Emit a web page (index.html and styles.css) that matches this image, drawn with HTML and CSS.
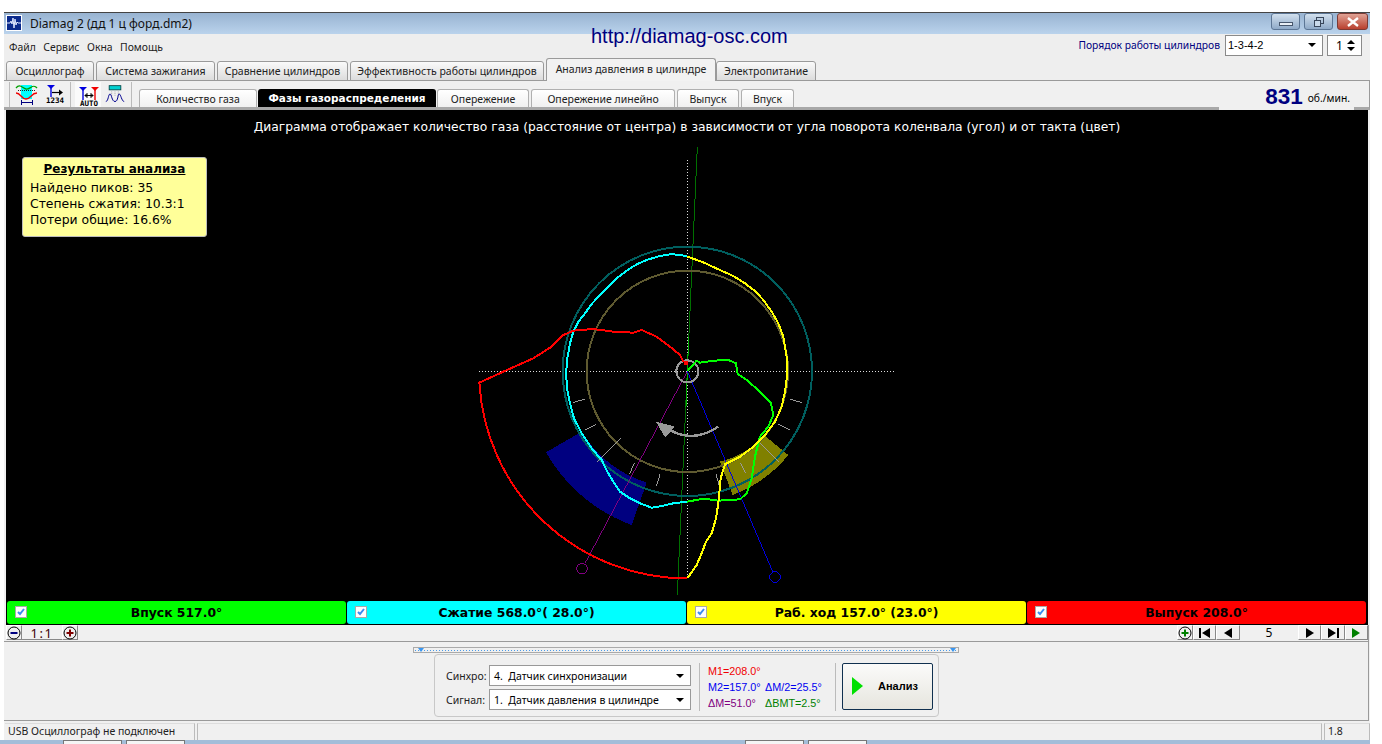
FILE: index.html
```html
<!DOCTYPE html>
<html lang="en">
<head>
    <meta charset="UTF-8">
    <meta name="viewport" content="width=device-width, initial-scale=1.0">
    <title>Diamag 2</title>
    <link rel="stylesheet" href="styles.css">
</head>
<body>

    <div class="window">

        <!-- Title bar -->
        <div class="titlebar">
            <svg class="app-icon" width="16" height="16" viewBox="0 0 16 16">
                <rect width="16" height="16" fill="#fff"/>
                <rect x="1" y="1" width="14" height="14" fill="#0a2a8c"/>
                <polyline points="1,8 4,8 5,6 6,9 7,3 8,13 9,4 10,10 11,7 12,8 15,8" fill="none" stroke="#dfe8ff" stroke-width="1"/>
            </svg>
            <span class="title-text">Diamag 2 (дд 1 ц форд.dm2)</span>
            <div class="win-buttons">
                <div class="win-btn"><span class="glyph-min"></span></div>
                <div class="win-btn">
                    <svg width="12" height="12" viewBox="0 0 12 12" fill="none" stroke="#38465a"><rect x="3.5" y="1.5" width="7" height="6"/><rect x="1.5" y="4.5" width="6" height="6" fill="#c9d9ea"/></svg>
                </div>
                <div class="win-btn win-close">
                    <svg width="14" height="10" viewBox="0 0 14 10" stroke="#fff" stroke-width="2.4"><path d="M2 1l10 8M12 1L2 9"/></svg>
                </div>
            </div>
        </div>

        <!-- Menu -->
        <div class="menubar">
            <span class="menu-item">Файл</span>
            <span class="menu-item">Сервис</span>
            <span class="menu-item">Окна</span>
            <span class="menu-item">Помощь</span>
            <div class="order">
                <span class="order-label">Порядок работы цилиндров</span>
                <div class="combo order-combo"><span>1-3-4-2</span><i class="arrow"></i></div>
                <div class="combo spin"><span>1</span><b class="spin-arrows"><i class="up"></i><i class="arrow"></i></b></div>
            </div>
        </div>
        <div class="site-link">http://diamag-osc.com</div>

        <!-- Main tabs -->
        <div class="tabs">
            <div class="tab">Осциллограф</div>
            <div class="tab">Система зажигания</div>
            <div class="tab">Сравнение цилиндров</div>
            <div class="tab">Эффективность работы цилиндров</div>
            <div class="tab tab-active">Анализ давления в цилиндре</div>
            <div class="tab">Электропитание</div>
        </div>

        <!-- Toolbar with sub tabs -->
        <div class="toolbar">
            <div class="tool-group">
                <svg class="tool" width="24" height="24" viewBox="0 0 24 24" fill="none">
                    <rect x="6" y="3" width="11" height="14" fill="#00ffff"/>
                    <path d="M1 6c4-5 6 0 10 1s7-6 11-1" stroke="#00a000" stroke-width="1.3"/>
                    <path d="M1 11c5 0 5 6 10 6s5-6 11-6" stroke="#f00000" stroke-width="1.3"/>
                    <path d="M3 8.500h17" stroke="#222" stroke-dasharray="1 1"/>
                    <path d="M6.500 18v5M17.500 18v5M7 20.500h10" stroke="#000080"/>
                </svg>
                <svg class="tool" width="20" height="24" viewBox="0 0 20 24" fill="none">
                    <path d="M2 3h8L6 7z" fill="#0000e0"/>
                    <path d="M6 6v9" stroke="#0000e0" stroke-width="1.4"/>
                    <path d="M7 10.500h8" stroke="#000" stroke-width="1.2"/>
                    <path d="M14 7.500l4 3-4 3z" fill="#000"/>
                    <text x="10" y="21" class="tool-text" text-anchor="middle">1234</text>
                </svg>
            </div>
            <div class="tool-group">
                <svg class="tool tool-pressed" width="26" height="25" viewBox="0 0 26 25" fill="none">
                    <path d="M4 5h8L8 9z" fill="#0000e0"/>
                    <path d="M16 5h8l-4 4z" fill="#f00000"/>
                    <path d="M8 8v10" stroke="#0000e0" stroke-width="1.4"/>
                    <path d="M20 8v10" stroke="#f00000" stroke-width="1.4"/>
                    <path d="M10 13.500h8M10 13.500l2-2v4zM18 13.500l-2-2v4z" stroke="#000"/>
                    <text x="14" y="24" class="tool-text" text-anchor="middle">AUTO</text>
                </svg>
                <svg class="tool" width="20" height="20" viewBox="0 0 24 24" fill="none">
                    <rect x="5" y="2" width="14" height="5" fill="#00d0d0" stroke="#004040"/>
                    <path d="M8 9v8M12 9v6M16 9v8" stroke="#999" stroke-dasharray="1 1"/>
                    <path d="M1 21c3 0 3-9 5-9s2 9 6 9 3-9 5-9 3 9 6 9" stroke="#000090" stroke-width="1.2"/>
                </svg>
            </div>
            <div class="subtabs">
                <div class="subtab">Количество газа</div>
                <div class="subtab subtab-active">Фазы газораспределения</div>
                <div class="subtab">Опережение</div>
                <div class="subtab">Опережение линейно</div>
                <div class="subtab">Выпуск</div>
                <div class="subtab">Впуск</div>
            </div>
            <div class="rpm"><b>831</b><span>об./мин.</span></div>
        </div>

        <!-- Diagram -->
        <div class="chart">
            <svg class="chart-svg" width="1362" height="490" viewBox="6 110 1362 490" fill="none">
                <g transform="translate(470 230) scale(.33333)">
                    <path d="M228 667L335 605A360 360 0 0 0 530 758L485 885A490 490 0 0 1 228 667Z" fill="#000080"/>
                    <path d="M750 695A295 295 0 0 0 885 618L955 675A394 394 0 0 1 788 795Z" fill="#808000"/>

                    <path d="M27 424H1272M652 -210V1045" stroke="#ddd" stroke-width="3" stroke-dasharray="3 6"/>
                    <path d="M682 -250L622 1095" stroke="#007000" stroke-width="3"/>
                    <path d="M656 320L648 530" stroke="#00b000" stroke-width="3"/>

                    <circle cx="652" cy="424" r="374" stroke="#005f5f" stroke-width="6"/>
                    <circle cx="652" cy="424" r="302" stroke="#5f5a30" stroke-width="6"/>

                    <path d="M652 424L345 1000" stroke="#800080" stroke-width="3"/>
                    <circle cx="336" cy="1016" r="16" stroke="#800080" stroke-width="3"/>
                    <path d="M652 424L908 1025" stroke="#0000e0" stroke-width="3"/>
                    <circle cx="915" cy="1041" r="16" stroke="#0000e0" stroke-width="3"/>

                    <path d="M310 517L345 508M345 600L378 583M380 697L452 625M478 733L493 700M560 767L570 733M738 733L748 767M810 698L828 730M870 640L925 695M925 583L960 600M960 508L995 517" stroke="#999" stroke-width="3"/>

                    <path d="M745 590Q670 640 600 600" stroke="#999" stroke-width="7"/>
                    <polygon points="558,575 615,590 585,622" fill="#999"/>

                    <circle cx="652" cy="424" r="33" stroke="#999" stroke-width="6"/>

                    <polyline class="curve" stroke="#00ffff" points="652,80 630,74 600,73 570,78 530,90 500,103 470,122 440,145 415,170 390,195 365,222 345,250 325,275 310,305 300,340 292,385 288,430 292,480 300,520 312,565 335,610 365,655 395,690 412,725 430,755 450,785 480,805 515,822 545,833 575,828 610,820 652,815"/>
                    <polyline class="curve" stroke="#00ff00" points="652,815 700,806 745,812 810,808 830,790 845,745 855,680 870,620 895,590 910,555 903,520 870,485 830,450 803,432 798,400 775,390 730,392 690,398 680,392 652,424"/>
                    <polyline class="curve" stroke="#ffff00" points="652,80 700,97 745,118 790,138 825,160 855,183 880,210 905,245 925,280 940,320 950,380 952,430 945,485 935,530 915,575 885,615 850,650 810,680 765,703 752,745 748,790 745,820 738,865 725,910 708,935 695,970 680,1005 652,1045"/>
                    <path class="curve" stroke="#ff0000" d="M652 1045A622 622 0 0 1 28 458L100 425 190 385 245 350 280 315 310 302 370 297 430 305 490 308 515 300 560 320 600 350 630 375 640 395"/>
                    <rect x="642" y="394" width="12" height="12" fill="#ff0000"/>
                </g>
            </svg>
            <div class="chart-caption">Диаграмма отображает количество газа (расстояние от центра) в зависимости от угла поворота коленвала (угол) и от такта (цвет)</div>
            <div class="results">
                <div class="results-title">Результаты анализа</div>
                <div>Найдено пиков: 35</div>
                <div>Степень сжатия: 10.3:1</div>
                <div>Потери общие: 16.6%</div>
            </div>
        </div>

        <!-- Stroke legend -->
        <div class="legend">
            <div class="stroke stroke-green">
                <svg class="check" width="12" height="12" viewBox="0 0 12 12"><rect x=".5" y=".5" width="11" height="11" fill="#fff" stroke="#aaa"/><path d="M3 6l2 2 4-5" fill="none" stroke="#3a8cf0" stroke-width="2"/></svg>
                Впуск 517.0°
            </div>
            <div class="stroke stroke-cyan">
                <svg class="check" width="12" height="12" viewBox="0 0 12 12"><rect x=".5" y=".5" width="11" height="11" fill="#fff" stroke="#aaa"/><path d="M3 6l2 2 4-5" fill="none" stroke="#3a8cf0" stroke-width="2"/></svg>
                Сжатие 568.0°( 28.0°)
            </div>
            <div class="stroke stroke-yellow">
                <svg class="check" width="12" height="12" viewBox="0 0 12 12"><rect x=".5" y=".5" width="11" height="11" fill="#fff" stroke="#aaa"/><path d="M3 6l2 2 4-5" fill="none" stroke="#3a8cf0" stroke-width="2"/></svg>
                Раб. ход 157.0° (23.0°)
            </div>
            <div class="stroke stroke-red">
                <svg class="check" width="12" height="12" viewBox="0 0 12 12"><rect x=".5" y=".5" width="11" height="11" fill="#fff" stroke="#aaa"/><path d="M3 6l2 2 4-5" fill="none" stroke="#3a8cf0" stroke-width="2"/></svg>
                Выпуск 208.0°
            </div>
        </div>

        <!-- Zoom and frame navigation -->
        <div class="navbar">
            <div class="nav-btn nav-small">
                <svg width="14" height="14" viewBox="0 0 14 14" fill="none"><circle cx="7" cy="7" r="6" stroke="#000"/><path d="M3.500 7h7" stroke="#000080" stroke-width="2"/></svg>
            </div>
            <div class="nav-value nav-scale">1:1</div>
            <div class="nav-btn nav-small">
                <svg width="14" height="14" viewBox="0 0 14 14" fill="none"><circle cx="7" cy="7" r="6" stroke="#000"/><path d="M3.500 7h7M7 3.500v7" stroke="#800000" stroke-width="2"/></svg>
            </div>
            <div class="nav-spacer"></div>
            <div class="nav-btn nav-small">
                <svg width="14" height="14" viewBox="0 0 14 14" fill="none"><circle cx="7" cy="7" r="6" stroke="#000"/><path d="M3.500 7h7M7 3.500v7" stroke="#008000" stroke-width="2"/></svg>
            </div>
            <div class="nav-btn">
                <svg width="12" height="10" viewBox="0 0 12 10"><path d="M0 0h2v10H0zM11 0v10L3 5z"/></svg>
            </div>
            <div class="nav-btn">
                <svg width="10" height="10" viewBox="0 0 10 10"><path d="M9 0v10L1 5z"/></svg>
            </div>
            <div class="nav-value nav-frame">5</div>
            <div class="nav-btn">
                <svg width="10" height="10" viewBox="0 0 10 10"><path d="M1 0v10l8-5z"/></svg>
            </div>
            <div class="nav-btn">
                <svg width="12" height="10" viewBox="0 0 12 10"><path d="M1 0v10l8-5zM10 0h2v10h-2z"/></svg>
            </div>
            <div class="nav-btn">
                <svg width="10" height="10" viewBox="0 0 10 10"><path d="M1 0v10l8-5z" fill="#008000"/></svg>
            </div>
        </div>

        <!-- Analysis panel -->
        <div class="panel">
            <div class="splitter"><i></i><i></i></div>
            <div class="group">
                <div class="selects">
                    <div class="select-row">
                        <label>Синхро:</label>
                        <div class="combo signal"><span>4.&nbsp; Датчик синхронизации</span><i class="arrow"></i></div>
                    </div>
                    <div class="select-row">
                        <label>Сигнал:</label>
                        <div class="combo signal"><span>1.&nbsp; Датчик давления в цилиндре</span><i class="arrow"></i></div>
                    </div>
                </div>
                <div class="readout">
                    <span class="c-red r-wide">M1=208.0°</span>
                    <span class="c-blue">M2=157.0°</span><span class="c-blue">ΔM/2=25.5°</span>
                    <span class="c-purple">ΔM=51.0°</span><span class="c-green">ΔBMT=2.5°</span>
                </div>
                <div class="run-btn"><i class="run-icon"></i><b>Анализ</b></div>
            </div>
        </div>

        <!-- Status bar -->
        <div class="statusbar">
            <div class="status-cell status-main">USB Осциллограф не подключен</div>
            <div class="status-cell status-fill"></div>
            <div class="status-cell status-ver">1.8</div>
        </div>
    </div>

    <!-- Taskbar edge below the window -->
    <div class="taskbar">
        <i class="task"></i><i class="task"></i>
        <i class="task task-b"></i><i class="task"></i>
    </div>

</body>
</html>
```

FILE: styles.css
```css
/* General styles */
html, body {
    height: 100%;
}

body {
    margin: 0;
    background: #fff;
    font-family: "Noto Sans", "Liberation Sans", sans-serif;
    font-size: 11px;
    color: #000;
    overflow: hidden;
    display: flex;
    flex-direction: column;
}

i {
    display: block;
}

.window {
    position: relative;
    width: 1366px;
    height: 728px;
    margin: 12px 0 0 4px;
    box-sizing: border-box;
    border-top: 1px solid #444;
    background: #f0f0f0;
    display: flex;
    flex-direction: column;
}

/* Title bar */
.titlebar {
    height: 21px;
    padding-left: 2px;
    display: flex;
    align-items: center;
    background: linear-gradient(#98b3d1, #bad3ec);
}

.app-icon {
    flex: none;
}

.title-text {
    margin-left: 8px;
    font-size: 12px;
    color: #111;
}

.win-buttons {
    margin-left: auto;
    margin-right: 2px;
    margin-bottom: 3px;
    display: flex;
    gap: 4px;
}

.win-btn {
    width: 29px;
    height: 17px;
    box-sizing: border-box;
    border: 1px solid #5c7695;
    border-radius: 3px;
    background: linear-gradient(#d2e0ee, #8faac8);
    display: flex;
    align-items: center;
    justify-content: center;
}

.win-close {
    width: 31px;
    border-color: #7c3a34;
    background: linear-gradient(#e0a294, #b9402f);
}

.glyph-min {
    width: 14px;
    height: 4px;
    margin-top: 4px;
    border: 1px solid #46566c;
    background: #e8eef5;
    box-sizing: border-box;
}

/* Menu */
.menubar {
    height: 24px;
    padding-left: 5px;
    padding-top: 2px;
    box-sizing: border-box;
    display: flex;
    align-items: center;
    gap: 7.5px;
    background: #eeeeee;
}

.menu-item {
    font-size: 10.4px;
    color: #222;
}

.order {
    margin-left: auto;
    margin-right: 8px;
    margin-bottom: 3px;
    display: flex;
    align-items: center;
}

.order-label {
    margin-right: 5px;
    font-size: 10.3px;
    color: #000080;
}

.combo {
    height: 21px;
    box-sizing: border-box;
    border: 1px solid #8a8a8a;
    background: #fff;
    display: flex;
    align-items: center;
    justify-content: space-between;
    padding: 0 6px 0 2px;
}

.order-combo {
    width: 98px;
    font-family: "Liberation Sans", sans-serif;
    font-size: 11px;
}

.spin {
    width: 35px;
    margin-left: 4px;
    padding-left: 8px;
    font-size: 12px;
}

.arrow {
    width: 0;
    height: 0;
    border: 4px solid transparent;
    border-bottom: 0;
    border-top: 4px solid #000;
}

.up {
    width: 0;
    height: 0;
    border: 4px solid transparent;
    border-top: 0;
    border-bottom: 4px solid #000;
    margin-bottom: 3px;
}

.spin-arrows {
    display: flex;
    flex-direction: column;
}

.site-link {
    position: absolute;
    left: 587px;
    top: 11px;
    font-family: "Liberation Sans", sans-serif;
    font-size: 20px;
    line-height: 24px;
    color: #000080;
}

/* Main tabs */
.tabs {
    height: 23px;
    box-sizing: border-box;
    padding-left: 2px;
    display: grid;
    grid-template-columns: 88px 119px 131px 194px 170px 98px;
    column-gap: 2px;
    align-items: end;
    border-bottom: 1px solid #9a9a9a;
    background: #eeeeee;
}

.tab {
    height: 20px;
    margin-bottom: -1px;
    box-sizing: border-box;
    border: 1px solid #9a9a9a;
    border-radius: 3px 3px 0 0;
    background: linear-gradient(#fafafa, #dcdcdc);
    font-size: 10.5px;
    line-height: 19px;
    text-align: center;
    white-space: nowrap;
    color: #222;
}

.tab-active {
    height: 23px;
    border-bottom: none;
    background: #f2f2f2;
    line-height: 20px;
}

.tab-active + .tab {
    margin-left: -2px;
}

/* Toolbar */
.toolbar {
    height: 29px;
    box-sizing: border-box;
    padding-left: 5px;
    display: flex;
    align-items: flex-end;
    border-bottom: 3px solid #a8a8a8;
    border-right: 1px solid #9a9a9a;
    background: #f0f0f0;
}

.tool-group {
    height: 25px;
    padding: 0 5px 0 5px;
    width: 52px;
    box-sizing: border-box;
    border-left: 1px solid #bbb;
    display: flex;
    gap: 6px;
    align-items: center;
}

.tool-group + .tool-group {
    width: 62px;
    padding-left: 4px;
    border-right: 1px solid #bbb;
    margin-left: 9px;
    gap: 4px;
}

.tool {
    flex: none;
}

.tool-pressed {
    background: #fafafa;
}

.tool-text {
    font-family: "DejaVu Sans Mono", monospace;
    font-size: 7.5px;
    font-weight: bold;
    fill: #000;
}

.subtabs {
    margin-left: 7px;
    display: grid;
    grid-template-columns: 118px 176px 92px 144px 62px 53px;
    column-gap: 2px;
    align-items: end;
}

.subtab {
    height: 18px;
    box-sizing: border-box;
    border: 1px solid #b0b0b0;
    border-bottom: none;
    border-radius: 3px 3px 0 0;
    background: linear-gradient(#fff, #f0f0f0);
    font-size: 10.5px;
    line-height: 18px;
    text-align: center;
    white-space: nowrap;
    color: #222;
}

.subtab-active {
    margin: 0 -1px;
    border: none;
    background: #000;
    color: #fff;
    font-family: "DejaVu Sans", sans-serif;
    font-weight: bold;
    font-size: 10.5px;
}

.rpm {
    margin-left: auto;
    margin-right: 15px;
    height: 26px;
    margin-bottom: -3px;
    padding: 0 4px 0 46px;
    display: flex;
    align-items: center;
    gap: 5px;
    background: #f0f0f0;
}

.rpm b {
    font-family: "Liberation Sans", sans-serif;
    font-size: 22.5px;
    color: #000080;
}

.rpm span {
    margin-top: 3px;
    font-size: 10.3px;
}

/* Diagram */
.chart {
    position: relative;
    height: 491px;
    margin-left: 2px;
    margin-right: 2px;
    background: #000;
    overflow: hidden;
}

.chart-svg {
    position: absolute;
    left: 0;
    top: 0;
    shape-rendering: crispEdges;
}

.curve {
    fill: none;
    stroke-width: 6;
    stroke-linejoin: round;
}

.chart-caption {
    position: relative;
    padding-top: 10px;
    font-family: "DejaVu Sans", sans-serif;
    font-size: 12.3px;
    line-height: 15px;
    text-align: center;
    color: #fff;
}

.results {
    position: absolute;
    left: 16px;
    top: 47px;
    width: 185px;
    height: 80px;
    padding-left: 7px;
    box-sizing: border-box;
    border: 1px solid #bbb;
    border-radius: 3px;
    background: #ffff99;
    font-family: "DejaVu Sans", sans-serif;
    font-size: 12.4px;
    line-height: 16px;
}

.results-title {
    margin: 3px 0 3px -7px;
    font-size: 12px;
    font-weight: bold;
    text-align: center;
    text-decoration: underline;
}

/* Stroke legend */
.legend {
    height: 25px;
    margin: 0 2px 0 2px;
    box-sizing: border-box;
    padding: 1px 1px 2px 1px;
    display: grid;
    grid-template-columns: repeat(4, 339px);
    column-gap: 1px;
    background: #000;
}

.stroke {
    position: relative;
    border-radius: 3px;
    font-family: "DejaVu Sans", sans-serif;
    font-size: 12.4px;
    font-weight: bold;
    line-height: 23px;
    text-align: center;
}

.stroke-green { background: #00ff00; }
.stroke-cyan { background: #00ffff; }
.stroke-yellow { background: #ffff00; }
.stroke-red { background: #ff0000; }

.check {
    position: absolute;
    left: 8px;
    top: 5px;
}

/* Navigation row */
.navbar {
    height: 16px;
    padding: 0 0 0 2px;
    margin-right: 1px;
    display: flex;
    border-bottom: 1px solid #9a9a9a;
    border-right: 1px solid #9a9a9a;
    background: #f0f0f0;
}

.nav-btn {
    width: 23.4px;
    height: 15px;
    box-sizing: border-box;
    border: 1px solid;
    border-color: #fff #888 #888 #fff;
    display: flex;
    align-items: center;
    justify-content: center;
    background: #f0f0f0;
}

.nav-small {
    width: 16px;
}

.nav-value {
    text-align: center;
    font-size: 12px;
    line-height: 16px;
}

.nav-scale {
    width: 40px;
    border-bottom: 1px solid #888;
    height: 14px;
    font-size: 13px;
    letter-spacing: 1.5px;
    line-height: 16px;
    color: #400000;
}

.nav-frame {
    width: 58px;
}

.nav-spacer {
    flex: 1;
}

/* Analysis panel */
.panel {
    height: 79px;
    margin-right: 1px;
    box-sizing: border-box;
    border-bottom: 1px solid #9a9a9a;
    border-right: 1px solid #9a9a9a;
    background: #f0f0f0;
    display: flex;
    flex-direction: column;
    align-items: center;
}

.splitter {
    width: 546px;
    height: 6px;
    margin: 5px 0 0 -1px;
    box-sizing: border-box;
    padding: 0 2px 0 4px;
    border: 1px solid #aaa;
    display: flex;
    justify-content: space-between;
    background: radial-gradient(circle, #4a9ae8 .5px, transparent .8px) 0 1px / 3px 3px repeat-x;
}

.splitter i {
    width: 0;
    height: 0;
    border: 3px solid transparent;
    border-bottom: 0;
    border-top: 4px solid #3a96f0;
}

.group {
    width: 505px;
    height: 63px;
    margin: 1px 0 0 1px;
    padding-top: 4px;
    box-sizing: border-box;
    border: 1px solid #c8c8c8;
    border-radius: 4px;
    display: flex;
    align-items: center;
}

.selects {
    width: 264px;
    padding: 0 8px 0 11px;
    box-sizing: border-box;
    display: flex;
    flex-direction: column;
    gap: 3px;
}

.select-row {
    display: flex;
    align-items: center;
    justify-content: space-between;
}

.select-row label {
    font-size: 10.5px;
    color: #222;
}

.signal {
    width: 202px;
    border: 1px solid #999;
    padding-left: 4px;
    font-size: 10.5px;
}

.readout {
    width: 137px;
    height: 48px;
    margin-top: -2px;
    box-sizing: border-box;
    padding-left: 8px;
    border-left: 1px solid #bbb;
    border-right: 1px solid #bbb;
    display: grid;
    grid-template-columns: 57px auto;
    align-content: center;
    font-family: "Liberation Sans", sans-serif;
    font-size: 10.8px;
    line-height: 16px;
    white-space: nowrap;
}

.r-wide {
    grid-column: 1 / 3;
}

.c-red { color: #f00000; }
.c-blue { color: #0000f0; }
.c-purple { color: #800080; }
.c-green { color: #008000; }

.run-btn {
    width: 91px;
    height: 47px;
    margin-left: 6px;
    margin-top: -3px;
    box-sizing: border-box;
    border: 1px solid #10304f;
    border-radius: 2px;
    background: linear-gradient(#fbfbfa, #e6e5de);
    display: flex;
    align-items: center;
    padding-left: 9px;
}

.run-icon {
    width: 0;
    height: 0;
    border: 9px solid transparent;
    border-right: 0;
    border-left: 11px solid #00e000;
}

.run-btn b {
    margin-left: 15px;
    font-family: "Liberation Sans", sans-serif;
    font-size: 11px;
}

/* Status bar */
.statusbar {
    flex: 1;
    display: flex;
    gap: 2px;
    padding: 2px 0 0 1px;
    background: #f0f0f0;
}

.status-cell {
    height: 17px;
    box-sizing: border-box;
    border-top: 1px solid #ddd;
    border-right: 1px solid #bbb;
    font-size: 10.5px;
    line-height: 14px;
    padding-left: 3px;
    color: #222;
}

.status-main {
    width: 190px;
}

.status-fill {
    flex: 1;
    border-left: 1px solid #bbb;
}

.status-ver {
    width: 46px;
    border-left: 1px solid #bbb;
}

/* Taskbar */
.taskbar {
    flex: 1;
    width: 1370px;
    padding-left: 63px;
    box-sizing: border-box;
    display: flex;
    background: #a3bdd9;
}

.task {
    width: 59px;
    margin-right: 4px;
    background: #f5f5f5;
    border: 1px solid #777;
    border-bottom: none;
    box-sizing: border-box;
}

.task-b {
    margin-left: 556px;
}
```
